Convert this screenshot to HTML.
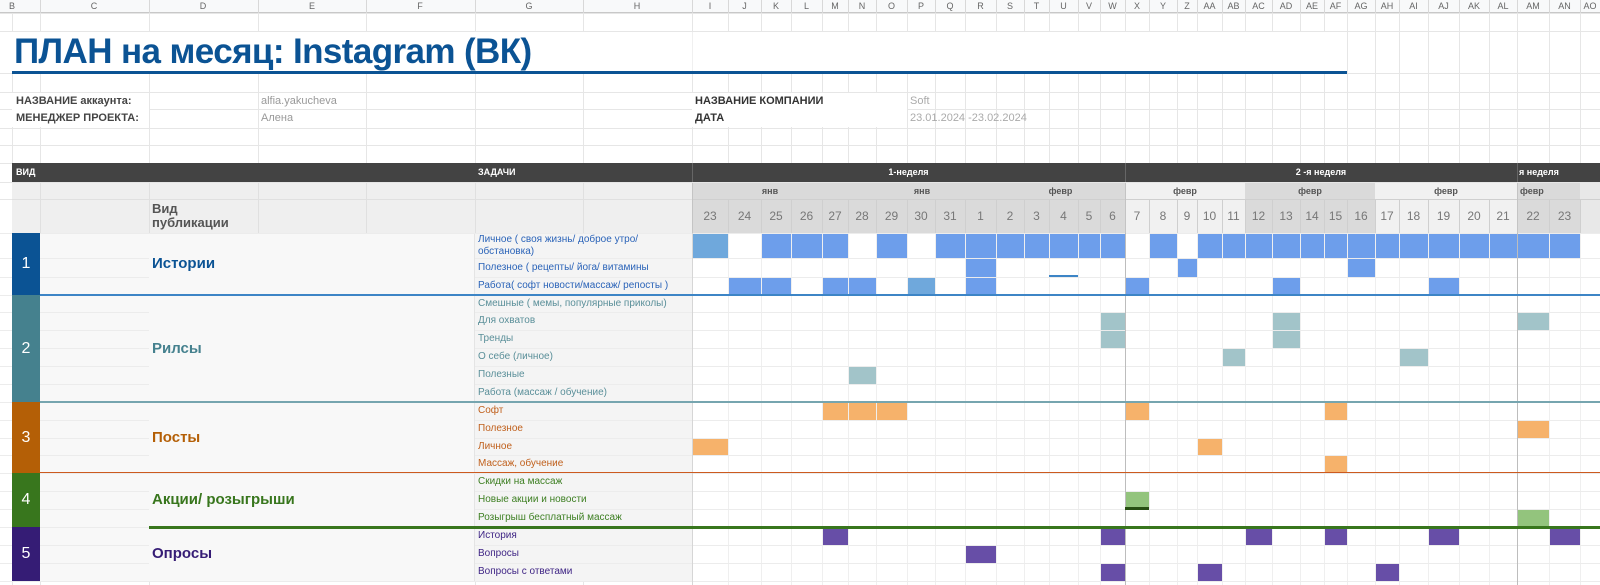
<!DOCTYPE html>
<html><head><meta charset="utf-8">
<style>
html,body{margin:0;padding:0;background:#fff;}
#c{position:relative;width:1600px;height:585px;overflow:hidden;background:#fff;font-family:"Liberation Sans Narrow","Liberation Sans",sans-serif;}
#c div{position:absolute;box-sizing:border-box;white-space:nowrap;}
</style></head>
<body><div id="c"></div>
<script>
var c=document.getElementById('c');
function R(x,y,w,h,bg,extra){var d=document.createElement('div');d.style.cssText='left:'+x+'px;top:'+y+'px;width:'+w+'px;height:'+h+'px;background:'+bg+';'+(extra||'');c.appendChild(d);return d;}
function T(x,y,t,css){var d=document.createElement('div');d.style.cssText='left:'+x+'px;top:'+y+'px;'+css;d.innerHTML=t;c.appendChild(d);return d;}
var d=[692,728,761,791,822,848,876,907,935,965,996,1024,1049,1078,1100,1125,1149,1177,1197,1222,1245,1272,1300,1324,1347,1375,1399,1428,1459,1489,1517,1549,1580,1600];
var left=[12,40,149,258,366,475,583,692];
var cols=left.concat(d.slice(1));
var topRows=[13,31,73,92,109,128,145,163,182,199,233];
var rows=[233,258,277,295,312,330,348,366,384,402,420,438,455,473,491,509,527,545,563,581,599];
var G='#e6e6e6';
cols.forEach(function(x){R(x,13,1,220,G);});
d.forEach(function(x){R(x,233,1,352,'#efefef');});
[12,40,149,475,583].forEach(function(x){R(x,233,1,352,G);});
topRows.forEach(function(y){R(0,y,1600,1,G);});
rows.forEach(function(y){R(0,y,1600,1,'#ececec');});
R(0,0,1600,13,'#f8f9fa','border-bottom:1px solid #c8c8c8');
var L=['B','C','D','E','F','G','H'];
var lc=[12,94,203,312,420,529,637];
L.forEach(function(l,i){T(lc[i]-10,1,l,'width:20px;text-align:center;font-size:9px;color:#666;line-height:11px;');});
var dl=['I','J','K','L','M','N','O','P','Q','R','S','T','U','V','W','X','Y','Z','AA','AB','AC','AD','AE','AF','AG','AH','AI','AJ','AK','AL','AM','AN','AO'];
for(var i=0;i<33;i++){var cx=(d[i]+d[i+1])/2;T(cx-15,1,dl[i],'width:30px;text-align:center;font-size:9px;color:#666;line-height:11px;');R(d[i],0,1,13,'#d8d8d8');}
[40,149,258,366,475,583].forEach(function(x){R(x,0,1,13,'#d8d8d8');});
R(12,32,1335,40,'#fff');R(692,32,1,40,'#f0f0f0');
T(14,30,'ПЛАН на месяц: Instagram (ВК)','font-size:35px;font-weight:bold;color:#0b5394;line-height:44px;letter-spacing:-0.6px;');
R(12,71,1335,3,'#0b5394');
R(12,93,137,34,'#fff');R(692,93,215,34,'#fff');
T(16,93,'НАЗВАНИЕ аккаунта:','font-size:11px;font-weight:bold;color:#444;line-height:16px;');
T(16,110,'МЕНЕДЖЕР ПРОЕКТА:','font-size:11px;font-weight:bold;color:#444;line-height:17px;');
T(261,93,'alfia.yakucheva','font-size:11px;color:#999;line-height:16px;');
T(261,110,'Алена','font-size:11px;color:#999;line-height:17px;');
T(695,93,'НАЗВАНИЕ КОМПАНИИ','font-size:11px;font-weight:bold;color:#333;line-height:16px;');
T(695,110,'ДАТА','font-size:11px;font-weight:bold;color:#333;line-height:17px;');
T(910,93,'Soft','font-size:11px;color:#aaa;line-height:16px;');
T(910,110,'23.01.2024 -23.02.2024','font-size:11px;color:#aaa;line-height:17px;');
R(12,163,1588,19,'#434343');
[692,1125,1517].forEach(function(x){R(x,163,1,19,'#666');});
var hs='font-size:9px;font-weight:bold;color:#fff;line-height:19px;';
T(16,163,'ВИД',hs);T(478,163,'ЗАДАЧИ',hs);
T(d[0],163,'1-неделя',hs+'width:'+(1125-692)+'px;text-align:center;');
T(1125,163,'2 -я неделя',hs+'width:'+(1517-1125)+'px;text-align:center;');
T(1519,163,'я неделя',hs);
R(12,183,680,16,'#efefef');R(12,200,680,33,'#efefef');
[40,149,258,366,475,583].forEach(function(x){R(x,183,1,50,'#e0e0e0');});
R(12,199,680,1,'#e0e0e0');
T(152,202,'Вид<br>публикации','font-size:13px;font-weight:bold;color:#555;line-height:14px;');
var ms=[[0,5,'#dadada','янв'],[5,10,'#dadada','янв'],[10,15,'#dadada','февр'],[15,20,'#f1f1f1','февр'],[20,25,'#dadada','февр'],[25,30,'#f1f1f1','февр'],[30,32,'#dadada','февр'],[32,33,'#e8e8e8','']];
ms.forEach(function(m){var x=d[m[0]],w=d[m[1]]-x;R(x,183,w,16,m[2]);R(x,200,w,33,m[2]);
 var st='font-size:9px;font-weight:bold;color:#555;line-height:16px;';
 if(m[0]==30)T(x+3,183,m[3],st);else T(x,183,m[3],st+'width:'+w+'px;text-align:center;');});
R(692,199,908,1,'#cfcfcf');
var days=[23,24,25,26,27,28,29,30,31,1,2,3,4,5,6,7,8,9,10,11,12,13,14,15,16,17,18,19,20,21,22,23];
for(var i=0;i<32;i++){var x=d[i],w=d[i+1]-x;R(x,200,1,33,'#cfcfcf');T(x,200,days[i],'width:'+w+'px;text-align:center;font-size:12px;color:#777;line-height:33px;');}
R(1580,200,1,33,'#cfcfcf');
[692,1125,1517].forEach(function(x){R(x,183,1,50,'#c4c4c4');});
var groups=[[0,3,'#0b5394','1','Истории'],[3,9,'#45818e','2','Рилсы'],[9,13,'#b45f06','3','Посты'],[13,16,'#38761d','4','Акции/ розыгрыши'],[16,19,'#351c75','5','Опросы']];
var tasks=['Личное ( своя жизнь/ доброе утро/<br>обстановка)','Полезное ( рецепты/ йога/ витамины','Работа( софт новости/массаж/ репосты )','Смешные ( мемы, популярные приколы)','Для охватов','Тренды','О себе (личное)','Полезные','Работа (массаж / обучение)','Софт','Полезное','Личное','Массаж, обучение','Скидки на массаж','Новые акции и новости','Розыгрыш бесплатный массаж','История','Вопросы','Вопросы с ответами'];
var tcol=['#2a63b8','#5a8f99','#c0601c','#3d7f22','#3f2585'];
groups.forEach(function(g,gi){
 var y0=rows[g[0]],y1=rows[g[1]];
 R(12,y0,28,y1-y0,g[2]);
 T(12,y0,g[3],'width:28px;text-align:center;color:#fff;font-size:16px;line-height:'+(y1-y0)+'px;');
 R(149,y0+1,326,y1-y0-1,'#f8f8f8','border-right:1px solid #e4e4e4');
 T(152,y0,g[4],'font-size:15px;font-weight:bold;color:'+g[2]+';line-height:'+(y1-y0)+'px;');
 for(var r=g[0];r<g[1];r++){
  var ya=rows[r],h=rows[r+1]-ya;
  R(40,ya+1,109,h-1,'#f8f8f8');
  R(475,ya+1,217,h-1,'#f4f4f4');
  T(478,ya+(r==0?1:0),tasks[r],'font-size:10px;color:'+tcol[gi]+';line-height:'+(r==0?12:h)+'px;');
 }
});
R(1125,233,1,352,'#bdbdbd');R(1517,233,1,352,'#bdbdbd');
R(692,233,1,352,'#d6d6d6');
var B='#6d9eeb',LB='#6fa8dc',TE='#a2c4c9',OR='#f6b26b',GR='#93c47d',PU='#674ea7';
function bar(r,i,col){R(d[i]+1,rows[r]+1,d[i+1]-d[i]-1,rows[r+1]-rows[r]-1,col);}
bar(0,0,LB);[2,3,4,6,8,9,10,11,12,13,14,16,18,19,20,21,22,23,24,25,26,27,28,29,30,31].forEach(function(i){bar(0,i,B);});
[9,17,24].forEach(function(i){bar(1,i,B);});
R(d[12],275,d[13]-d[12],2,'#3d85c6');
[1,2,4,5,9,15,21,27].forEach(function(i){bar(2,i,B);});bar(2,7,LB);
[14,21,30].forEach(function(i){bar(4,i,TE);});
[14,21].forEach(function(i){bar(5,i,TE);});
[19,26].forEach(function(i){bar(6,i,TE);});
bar(7,5,TE);
[4,5,6,15,23].forEach(function(i){bar(9,i,OR);});
bar(10,30,OR);
[0,18].forEach(function(i){bar(11,i,OR);});
bar(12,23,OR);
bar(14,15,GR);R(d[15],507,d[16]-d[15],3,'#274e13');
bar(15,30,GR);
[4,14,20,23,27,31].forEach(function(i){bar(16,i,PU);});
bar(17,9,PU);
[14,18,25].forEach(function(i){bar(18,i,PU);});
R(40,294,1560,2,'#3d85c6');
R(40,401,1560,2,'#76a5af');
R(40,472,1560,1,'#cc5a1f');
R(149,526,1451,3,'#38761d');
</script>
</body></html>
